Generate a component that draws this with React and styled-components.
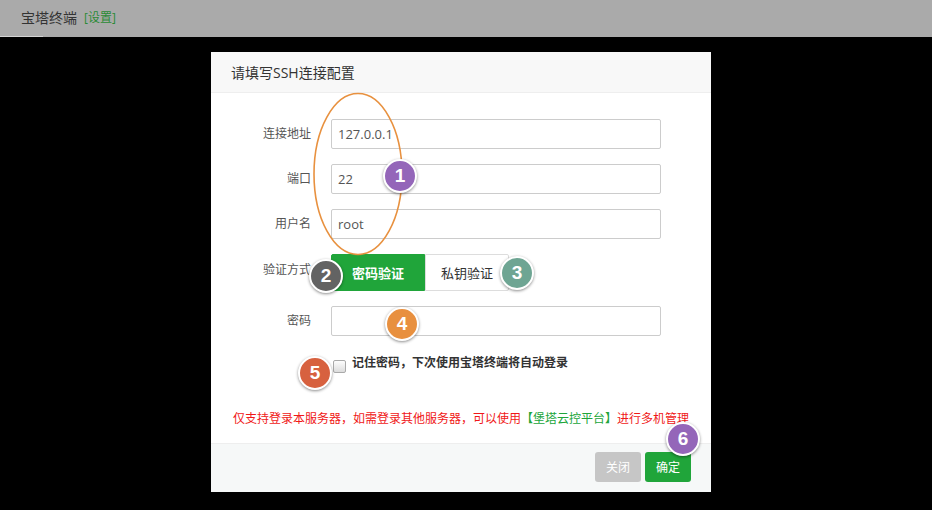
import styled, { createGlobalStyle } from 'styled-components';

/* ---------------------------------- style --------------------------------- */
const GlobalStyle = createGlobalStyle`
  html, body {
    margin: 0;
    padding: 0;
    background: #000;
  }
  body {
    font-family: "Open Sans", "Noto Sans CJK SC", sans-serif;
    width: 932px;
    height: 510px;
    overflow: hidden;
  }
`;

const Page = styled.div`
  display: flex;
  flex-direction: column;
  width: 932px;
  height: 510px;
  background: #000;
`;

const TopBar = styled.div`
  display: flex;
  flex-direction: column;
  background: #aaa;
  height: 37px;
`;

const TopRow = styled.div`
  flex: 1;
  display: flex;
  align-items: center;
  gap: 7px;
  padding-left: 21px;
`;

const TabTitle = styled.span`
  font-size: 14px;
  color: #333;
  line-height: 20px;
`;

const SettingLink = styled.span`
  font-size: 12px;
  color: #2b8a36;
  line-height: 20px;
`;

const TabLine = styled.div`
  width: 43px;
  height: 1px;
  background: #d4d4d4;
`;

const Dialog = styled.div`
  position: relative;
  display: flex;
  flex-direction: column;
  width: 500px;
  height: 440px;
  margin: 15px 0 0 211px;
  background: #fff;
`;

const Header = styled.div`
  display: flex;
  align-items: center;
  height: 40px;
  padding-left: 20px;
  background: #f8f8f8;
  border-bottom: 1px solid #eee;
  font-size: 14px;
  color: #333;
`;

const Body = styled.div`
  flex: 1;
  display: flex;
  flex-direction: column;
  padding-top: 26px;
`;

const Row = styled.div`
  display: flex;
  align-items: center;
  margin-bottom: ${(p) => p.$gap ?? 15}px;
`;

const Label = styled.label`
  width: 100px;
  padding-right: 20px;
  text-align: right;
  font-size: 12px;
  color: #555;
  line-height: 20px;
  margin-top: ${(p) => p.$lift ? '-6px' : '0'};
`;

const Input = styled.div`
  box-sizing: border-box;
  width: 330px;
  height: 30px;
  border: 1px solid #ccc;
  border-radius: 2px;
  padding-left: 6px;
  display: flex;
  align-items: center;
  font-size: 13px;
  color: #555;
`;

const SwitchGroup = styled.div`
  display: flex;
  height: 37px;
`;

const SwitchBtn = styled.div`
  box-sizing: border-box;
  display: flex;
  align-items: center;
  height: 37px;
  padding: 0 ${(p) => (p.$active ? 20 : 15)}px;
  font-size: 13px;
  font-weight: ${(p) => (p.$active ? 'bold' : 'normal')};
  color: ${(p) => (p.$active ? '#fff' : '#333')};
  background: ${(p) => (p.$active ? '#20a53a' : '#fff')};
  border: 1px solid ${(p) => (p.$active ? '#20a53a' : '#ddd')};
  border-radius: ${(p) => (p.$active ? '2px 0 0 2px' : '0 2px 2px 0')};
`;

const CheckRow = styled.div`
  display: flex;
  align-items: flex-start;
  gap: 6px;
  margin: 19px 0 0 122px;
`;

const CheckBox = styled.span`
  box-sizing: border-box;
  width: 13px;
  height: 13px;
  margin-top: 5px;
  border: 1px solid #a9a9a9;
  border-radius: 2px;
  background: linear-gradient(#fdfdfd, #dcdcdc);
`;

const CheckText = styled.span`
  font-size: 12px;
  font-weight: bold;
  color: #333;
  line-height: 20px;
  margin-top: -2px;
`;

const Note = styled.p`
  margin: 36px 0 0;
  text-align: center;
  font-size: 12px;
  line-height: 20px;
  color: #f01818;
`;

const NoteLink = styled.span`
  color: #20a53a;
`;

const Footer = styled.div`
  display: flex;
  justify-content: flex-end;
  align-items: flex-start;
  gap: 4px;
  height: 40px;
  padding: 8px 20px 0 0;
  background: #f6f8f8;
  border-top: 1px solid #eee;
`;

const Button = styled.div`
  display: flex;
  align-items: center;
  justify-content: center;
  width: 46px;
  height: 30px;
  border-radius: 3px;
  font-size: 12px;
  color: #fff;
  background: ${(p) => (p.$primary ? '#20a53a' : '#c6c6c6')};
`;

/* annotation layer — drawn over the dialog */
const Ring = styled.svg`
  position: absolute;
  left: 100px;
  top: 38px;
  pointer-events: none;
`;

const Badge = styled.div`
  position: absolute;
  left: ${(p) => p.$x - 17}px;
  top: ${(p) => p.$y - 17}px;
  box-sizing: border-box;
  width: 34px;
  height: 34px;
  border-radius: 50%;
  border: 2px solid #fff;
  box-shadow: 0 1px 3px rgba(0, 0, 0, 0.45);
  background: ${(p) => p.$color};
  color: #fff;
  display: flex;
  align-items: center;
  justify-content: center;
  font-family: "Liberation Sans", Arial, sans-serif;
  font-weight: bold;
  font-size: 19px;
`;

const badges = [
  { n: 1, x: 189, y: 124, color: '#9466b9' },
  { n: 2, x: 115, y: 224, color: '#636363' },
  { n: 3, x: 306, y: 221, color: '#6ea593' },
  { n: 4, x: 191, y: 272, color: '#e8903f' },
  { n: 5, x: 104, y: 321, color: '#d7613f' },
  { n: 6, x: 472, y: 387, color: '#9466b9' },
];

/* -------------------------------- component ------------------------------- */
const App = () => {
  return (
    <Page>
      <GlobalStyle />
      <TopBar>
        <TopRow>
          <TabTitle>宝塔终端</TabTitle>
          <SettingLink>[设置]</SettingLink>
        </TopRow>
        <TabLine />
      </TopBar>

      <Dialog>
        <Header>请填写SSH连接配置</Header>
        <Body>
          <Row>
            <Label>连接地址</Label>
            <Input>127.0.0.1</Input>
          </Row>
          <Row>
            <Label>端口</Label>
            <Input>22</Input>
          </Row>
          <Row>
            <Label>用户名</Label>
            <Input>root</Input>
          </Row>
          <Row>
            <Label $lift>验证方式</Label>
            <SwitchGroup>
              <SwitchBtn $active>密码验证</SwitchBtn>
              <SwitchBtn>私钥验证</SwitchBtn>
            </SwitchGroup>
          </Row>
          <Row $gap={0}>
            <Label>密码</Label>
            <Input />
          </Row>
          <CheckRow>
            <CheckBox />
            <CheckText>记住密码，下次使用宝塔终端将自动登录</CheckText>
          </CheckRow>
          <Note>
            仅支持登录本服务器，如需登录其他服务器，可以使用
            <NoteLink>【堡塔云控平台】</NoteLink>进行多机管理
          </Note>
        </Body>
        <Footer>
          <Button>关闭</Button>
          <Button $primary>确定</Button>
        </Footer>

        <Ring width="94" height="168" viewBox="0 0 94 168">
          <ellipse cx="47" cy="84" rx="44" ry="80.5" fill="none" stroke="#e8913f" strokeWidth="1.6" />
        </Ring>
        {badges.map((b) => (
          <Badge key={b.n} $x={b.x} $y={b.y} $color={b.color}>
            {b.n}
          </Badge>
        ))}
      </Dialog>
    </Page>
  );
};

export default App;
